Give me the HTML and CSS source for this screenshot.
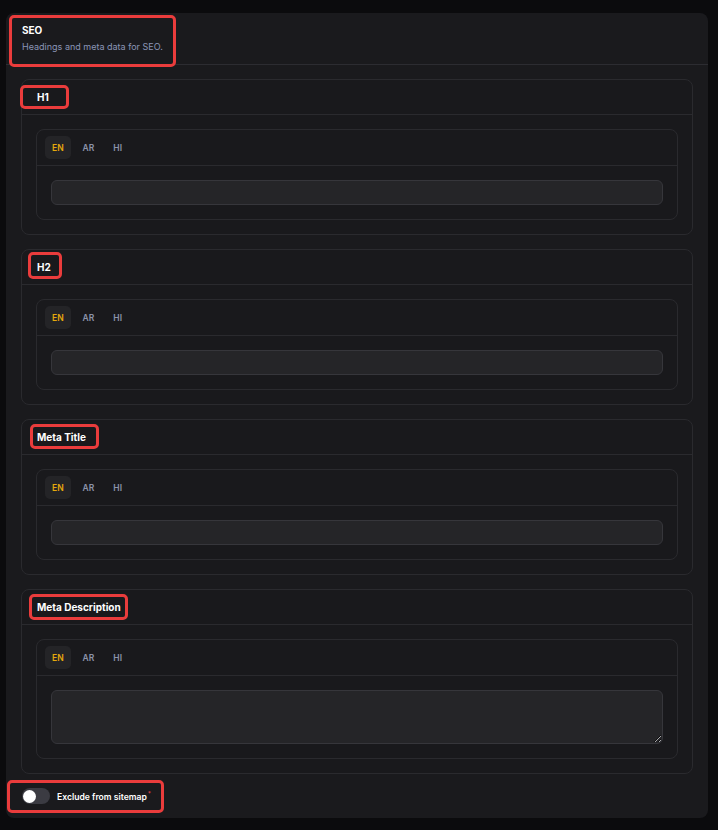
FILE: index.html
```html
<!DOCTYPE html>
<html lang="en">
<head>
<meta charset="utf-8">
<title>SEO</title>
<link rel="stylesheet" href="styles.css">
</head>
<body>
<div class="page">
  <section class="card">
    <header class="card-head">
      <h2 class="card-title">SEO</h2>
      <p class="card-sub">Headings and meta data for SEO.</p>
      <span class="mark mark-seo"></span>
    </header>
    <div class="card-body">
      <div class="field">
        <div class="field-head">H1<span class="mark mark-h1"></span></div>
        <div class="field-body">
          <div class="lang">
            <div class="tabs"><span class="tab active">EN</span><span class="tab">AR</span><span class="tab">HI</span></div>
            <div class="lang-body"><input class="input" type="text"></div>
          </div>
        </div>
      </div>
      <div class="field">
        <div class="field-head">H2<span class="mark mark-h2"></span></div>
        <div class="field-body">
          <div class="lang">
            <div class="tabs"><span class="tab active">EN</span><span class="tab">AR</span><span class="tab">HI</span></div>
            <div class="lang-body"><input class="input" type="text"></div>
          </div>
        </div>
      </div>
      <div class="field">
        <div class="field-head">Meta Title<span class="mark mark-mt"></span></div>
        <div class="field-body">
          <div class="lang">
            <div class="tabs"><span class="tab active">EN</span><span class="tab">AR</span><span class="tab">HI</span></div>
            <div class="lang-body"><input class="input" type="text"></div>
          </div>
        </div>
      </div>
      <div class="field">
        <div class="field-head">Meta Description<span class="mark mark-md"></span></div>
        <div class="field-body">
          <div class="lang">
            <div class="tabs"><span class="tab active">EN</span><span class="tab">AR</span><span class="tab">HI</span></div>
            <div class="lang-body"><textarea class="textarea"></textarea></div>
          </div>
        </div>
      </div>
      <div class="foot">
        <span class="toggle"><span class="knob"></span></span>
        <span class="foot-label">Exclude from sitemap<sup class="req">*</sup></span>
        <span class="mark mark-foot"></span>
      </div>
    </div>
  </section>
</div>
</body>
</html>
```

FILE: styles.css
```css
* { box-sizing: border-box; }
html, body { margin: 0; padding: 0; }
body {
  background: #0b0b0d;
  font-family: Inter, "Noto Sans", "Liberation Sans", sans-serif;
  color: #f4f4f5;
}
.page {
  width: 718px;
  height: 830px;
  padding: 13px 10px 14px 6px;
}
.card {
  background: #1a1a1d;
  border-radius: 8px;
  width: 702px;
}
.card-head {
  position: relative;
  padding: 10px 16px 11px;
  border-bottom: 1px solid #2c2c31;
}
.card-title {
  margin: 0 0 2px;
  font-size: 10px;
  line-height: 15px;
  font-weight: 700;
  color: #ffffff;
}
.card-sub {
  margin: 0;
  font-size: 9px;
  line-height: 13px;
  color: #8a95b6;
}
.card-body {
  padding: 14px 15px 14px;
  display: flex;
  flex-direction: column;
  gap: 14px;
}
.field {
  border: 1px solid #2a2a2e;
  border-radius: 8px;
  background: #19191c;
}
.field-head {
  position: relative;
  height: 35px;
  display: flex;
  align-items: center;
  padding: 0 15px;
  font-size: 10px;
  font-weight: 700;
  color: #ffffff;
  border-bottom: 1px solid #2a2a2e;
}
.field-body {
  padding: 14px;
}
.lang {
  border: 1px solid #2a2a2e;
  border-radius: 8px;
}
.tabs {
  height: 36px;
  display: flex;
  align-items: flex-start;
  gap: 5px;
  padding: 6px 8px 0;
  border-bottom: 1px solid #2a2a2e;
}
.tab {
  height: 23px;
  display: flex;
  align-items: center;
  padding: 0 7px;
  border-radius: 5px;
  font-size: 8.5px;
  font-weight: 600;
  color: #8b93a8;
}
.tab.active {
  background: #242427;
  color: #e6a90c;
}
.lang-body {
  padding: 14px;
  display: flex;
}
.input {
  flex: 1;
  height: 25px;
  background: #252528;
  border: 1px solid #36363b;
  border-radius: 6px;
  outline: none;
  color: #fff;
}
.textarea {
  flex: 1;
  height: 54px;
  background: #252528;
  border: 1px solid #36363b;
  border-radius: 6px;
  outline: none;
  resize: vertical;
  color-scheme: dark;
  display: block;
}
.foot {
  position: relative;
  display: flex;
  align-items: center;
  gap: 7px;
  height: 16px;
  padding-left: 1px;
}
.toggle {
  width: 28px;
  height: 16px;
  border-radius: 8px;
  background: #3b3b42;
  display: flex;
  align-items: center;
  padding-left: 1px;
}
.knob {
  width: 13px;
  height: 13px;
  border-radius: 50%;
  background: #ffffff;
}
.foot-label {
  font-size: 8.6px;
  font-weight: 600;
  color: #ffffff;
}
.req {
  color: #ef4444;
  font-size: 6px;
  margin-left: 1px;
  vertical-align: 4px;
}
.mark {
  position: absolute;
  border: 3px solid #ea3c3c;
  border-radius: 5px;
  pointer-events: none;
}
.mark-seo { left: 3px; top: 2px; width: 167px; height: 52px; }
.mark-h1 { left: -2px; top: 5px; width: 49px; height: 24px; }
.mark-h2 { left: 6px; top: 2px; width: 34px; height: 27px; }
.mark-mt { left: 8px; top: 4px; width: 69px; height: 25px; }
.mark-md { left: 7px; top: 4px; width: 99px; height: 26px; }
.mark-foot { left: -14px; top: -8px; width: 157px; height: 33px; }
```
